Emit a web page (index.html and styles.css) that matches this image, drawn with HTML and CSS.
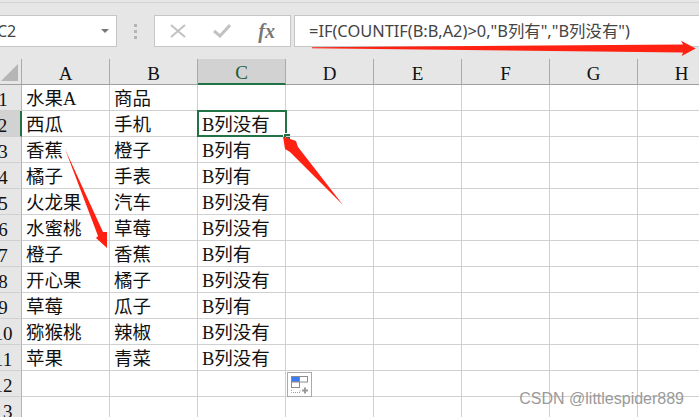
FILE: index.html
```html
<!DOCTYPE html>
<html lang="zh">
  <head>
    <meta charset="UTF-8" />
    <title>Excel COUNTIF</title>
    <link rel="stylesheet" href="styles.css">
  </head>
  <body>
    <div class="toolbar">
      <div class="name-box">
        <span class="name-text">C2</span>
        <i class="caret"></i>
      </div>
      <div class="grip"><i></i><i></i><i></i></div>
      <div class="fx-buttons">
        <svg class="btn-icon" width="16" height="14" viewBox="0 0 16 14">
          <path d="M1 1L15 13M15 1L1 13" stroke="#c2c2c2" stroke-width="2" fill="none" />
        </svg>
        <svg class="btn-icon" width="18" height="14" viewBox="0 0 18 14">
          <path d="M1 7L7 12L17 1" stroke="#c2c2c2" stroke-width="3" fill="none" />
        </svg>
        <span class="fx">fx</span>
      </div>
      <div class="formula">=IF(COUNTIF(B:B,A2)&gt;0,"B列有","B列没有")</div>
    </div>

    <div class="sheet">
      <div class="corner"><i></i></div>
      <div class="col-head">A</div>
      <div class="col-head">B</div>
      <div class="col-head active">C</div>
      <div class="col-head">D</div>
      <div class="col-head">E</div>
      <div class="col-head">F</div>
      <div class="col-head">G</div>
      <div class="col-head">H</div>

      <div class="row-head">1</div>
      <div class="cell">水果A</div><div class="cell">商品</div><div class="cell"></div><div class="cell"></div><div class="cell"></div><div class="cell"></div><div class="cell"></div><div class="cell"></div>

      <div class="row-head active">2</div>
      <div class="cell">西瓜</div><div class="cell">手机</div><div class="cell selected">B列没有</div><div class="cell"></div><div class="cell"></div><div class="cell"></div><div class="cell"></div><div class="cell"></div>

      <div class="row-head">3</div>
      <div class="cell">香蕉</div><div class="cell">橙子</div><div class="cell">B列有</div><div class="cell"></div><div class="cell"></div><div class="cell"></div><div class="cell"></div><div class="cell"></div>

      <div class="row-head">4</div>
      <div class="cell">橘子</div><div class="cell">手表</div><div class="cell">B列有</div><div class="cell"></div><div class="cell"></div><div class="cell"></div><div class="cell"></div><div class="cell"></div>

      <div class="row-head">5</div>
      <div class="cell">火龙果</div><div class="cell">汽车</div><div class="cell">B列没有</div><div class="cell"></div><div class="cell"></div><div class="cell"></div><div class="cell"></div><div class="cell"></div>

      <div class="row-head">6</div>
      <div class="cell">水蜜桃</div><div class="cell">草莓</div><div class="cell">B列没有</div><div class="cell"></div><div class="cell"></div><div class="cell"></div><div class="cell"></div><div class="cell"></div>

      <div class="row-head">7</div>
      <div class="cell">橙子</div><div class="cell">香蕉</div><div class="cell">B列有</div><div class="cell"></div><div class="cell"></div><div class="cell"></div><div class="cell"></div><div class="cell"></div>

      <div class="row-head">8</div>
      <div class="cell">开心果</div><div class="cell">橘子</div><div class="cell">B列没有</div><div class="cell"></div><div class="cell"></div><div class="cell"></div><div class="cell"></div><div class="cell"></div>

      <div class="row-head">9</div>
      <div class="cell">草莓</div><div class="cell">瓜子</div><div class="cell">B列有</div><div class="cell"></div><div class="cell"></div><div class="cell"></div><div class="cell"></div><div class="cell"></div>

      <div class="row-head">10</div>
      <div class="cell">猕猴桃</div><div class="cell">辣椒</div><div class="cell">B列没有</div><div class="cell"></div><div class="cell"></div><div class="cell"></div><div class="cell"></div><div class="cell"></div>

      <div class="row-head">11</div>
      <div class="cell">苹果</div><div class="cell">青菜</div><div class="cell">B列没有</div><div class="cell"></div><div class="cell"></div><div class="cell"></div><div class="cell"></div><div class="cell"></div>

      <div class="row-head">12</div>
      <div class="cell"></div><div class="cell"></div><div class="cell"></div><div class="cell"></div><div class="cell"></div><div class="cell"></div><div class="cell"></div><div class="cell"></div>

      <div class="row-head">13</div>
      <div class="cell"></div><div class="cell"></div><div class="cell"></div><div class="cell"></div><div class="cell"></div><div class="cell"></div><div class="cell"></div><div class="cell"></div>
    </div>

    <!-- botón de opciones de pegado -->
    <div class="paste-options">
      <svg width="24" height="24" viewBox="0 0 24 24">
        <rect x="3.5" y="3.5" width="8" height="5.5" fill="#3a7cf5" stroke="#8c8c8c" />
        <rect x="11.5" y="3.5" width="8" height="5.5" fill="#fff" stroke="#8c8c8c" />
        <rect x="3.5" y="9" width="8" height="5.5" fill="#fff" stroke="#8c8c8c" />
        <path d="M3.5 17V19.5H12V17" stroke="#9a9a9a" stroke-dasharray="1 1" fill="none" />
        <path d="M14 17.5H20M17 14.5V20.5" stroke="#9a9a9a" stroke-width="2" fill="none" />
      </svg>
    </div>

    <!-- flechas rojas dibujadas sobre la captura -->
    <svg class="arrows" width="699" height="417" viewBox="0 0 699 417">
      <polygon points="312,47.3 683,44.6 681,40.7 695.7,48.5 681.7,56 683,52.5 312,48.3" />
      <polygon points="65,149 103,232 107,232 107,248 96,238 98,236" />
      <polygon points="343,205 298,147 296,141 283,136.5 285,149 290,152" />
    </svg>

    <div class="watermark">CSDN @littlespider889</div>
  </body>
</html>
```

FILE: styles.css
```css
html,
body {
  margin: 0;
  height: 417px;
  overflow: hidden;
  background-color: #fff;
}
body {
  position: relative;
}
.toolbar {
  box-sizing: border-box;
  height: 59px;
  padding-top: 15px;
  display: flex;
  align-items: flex-start;
  background: linear-gradient(#e6e6e6 2px, #d4d4d4 2px, #d4d4d4 3px, #e6e6e6 3px);
  overflow: hidden;
}
.name-box {
  box-sizing: border-box;
  flex: none;
  width: 118px;
  height: 32px;
  margin-left: -1px;
  padding-right: 7px;
  display: flex;
  align-items: center;
  justify-content: space-between;
  background-color: #fff;
  border: 1px solid #c6c6c6;
  font-family: "Noto Sans", sans-serif;
  font-size: 16px;
  color: #444;
}
.name-text {
  margin-left: -3px;
}
.caret {
  width: 0;
  height: 0;
  border-left: 4px solid transparent;
  border-right: 4px solid transparent;
  border-top: 4px solid #777;
}
.grip {
  flex: none;
  width: 37px;
  height: 32px;
  display: flex;
  flex-direction: column;
  align-items: center;
  justify-content: center;
  gap: 3px;
}
.grip i {
  width: 3px;
  height: 3px;
  background-color: #b4b4b4;
}
.fx-buttons {
  box-sizing: border-box;
  flex: none;
  width: 137px;
  height: 32px;
  margin-right: 3px;
  padding: 0 15px 0 15px;
  display: flex;
  align-items: center;
  justify-content: space-between;
  background-color: #fff;
  border: 1px solid #c6c6c6;
}
.fx {
  font-family: "Liberation Serif", serif;
  font-style: italic;
  font-weight: bold;
  font-size: 20px;
  color: #777;
}
.formula {
  box-sizing: border-box;
  flex: none;
  width: 420px;
  height: 32px;
  padding-left: 14px;
  line-height: 30px;
  background-color: #fff;
  border: 1px solid #c6c6c6;
  font-family: "Noto Sans", "Noto Sans CJK SC", sans-serif;
  font-size: 16.4px;
  color: #444;
  white-space: nowrap;
}
.sheet {
  display: grid;
  grid-template-columns: 37px repeat(8, 88px);
  grid-auto-rows: 26px;
  margin-left: -15px;
  font-family: "Liberation Serif", "Noto Sans CJK SC", serif;
  color: #111;
}
.corner,
.col-head,
.row-head {
  box-sizing: border-box;
  display: flex;
  align-items: center;
  justify-content: center;
  padding-top: 4px;
  background-color: #e6e6e6;
  font-size: 19px;
}
.corner {
  position: relative;
  border-right: 1px solid #aaa;
  border-bottom: 1px solid #9f9f9f;
}
.corner i {
  position: absolute;
  right: 3px;
  bottom: 3px;
  width: 0;
  height: 0;
  border-left: 17px solid transparent;
  border-bottom: 17px solid #b5b5b5;
}
.col-head {
  border-right: 1px solid #aaa;
  border-bottom: 1px solid #9f9f9f;
}
.col-head.active {
  background-color: #d2d2d2;
  border-bottom: 2px solid #217346;
  color: #1c5c38;
}
.row-head {
  border-right: 1px solid #b4b4b4;
  border-bottom: 1px solid #d0d0d0;
}
.row-head.active {
  background-color: #d2d2d2;
  border-right: 2px solid #217346;
}
.cell {
  box-sizing: border-box;
  position: relative;
  padding-left: 4px;
  line-height: 29px;
  font-size: 18.5px;
  white-space: nowrap;
  border-right: 1px solid #d0d0d0;
  border-bottom: 1px solid #d0d0d0;
}
.selected::before {
  content: "";
  position: absolute;
  left: -1px;
  top: -1px;
  width: 86px;
  height: 23px;
  border: 2px solid #217346;
}
.selected::after {
  content: "";
  position: absolute;
  right: -5px;
  bottom: -4px;
  width: 6px;
  height: 6px;
  background-color: #217346;
  border-left: 1px solid #fff;
  border-top: 1px solid #fff;
}
.paste-options {
  box-sizing: border-box;
  position: absolute;
  left: 287px;
  top: 372px;
  width: 25px;
  height: 25px;
  background-color: #fff;
  border: 1px solid #aaa;
}
.paste-options svg {
  display: block;
}
.arrows {
  position: absolute;
  left: 0;
  top: 0;
  fill: #ff2212;
}
.watermark {
  position: absolute;
  right: 15px;
  top: 390px;
  font-family: "Liberation Sans", sans-serif;
  font-size: 16px;
  color: #9a9a9a;
}
```
